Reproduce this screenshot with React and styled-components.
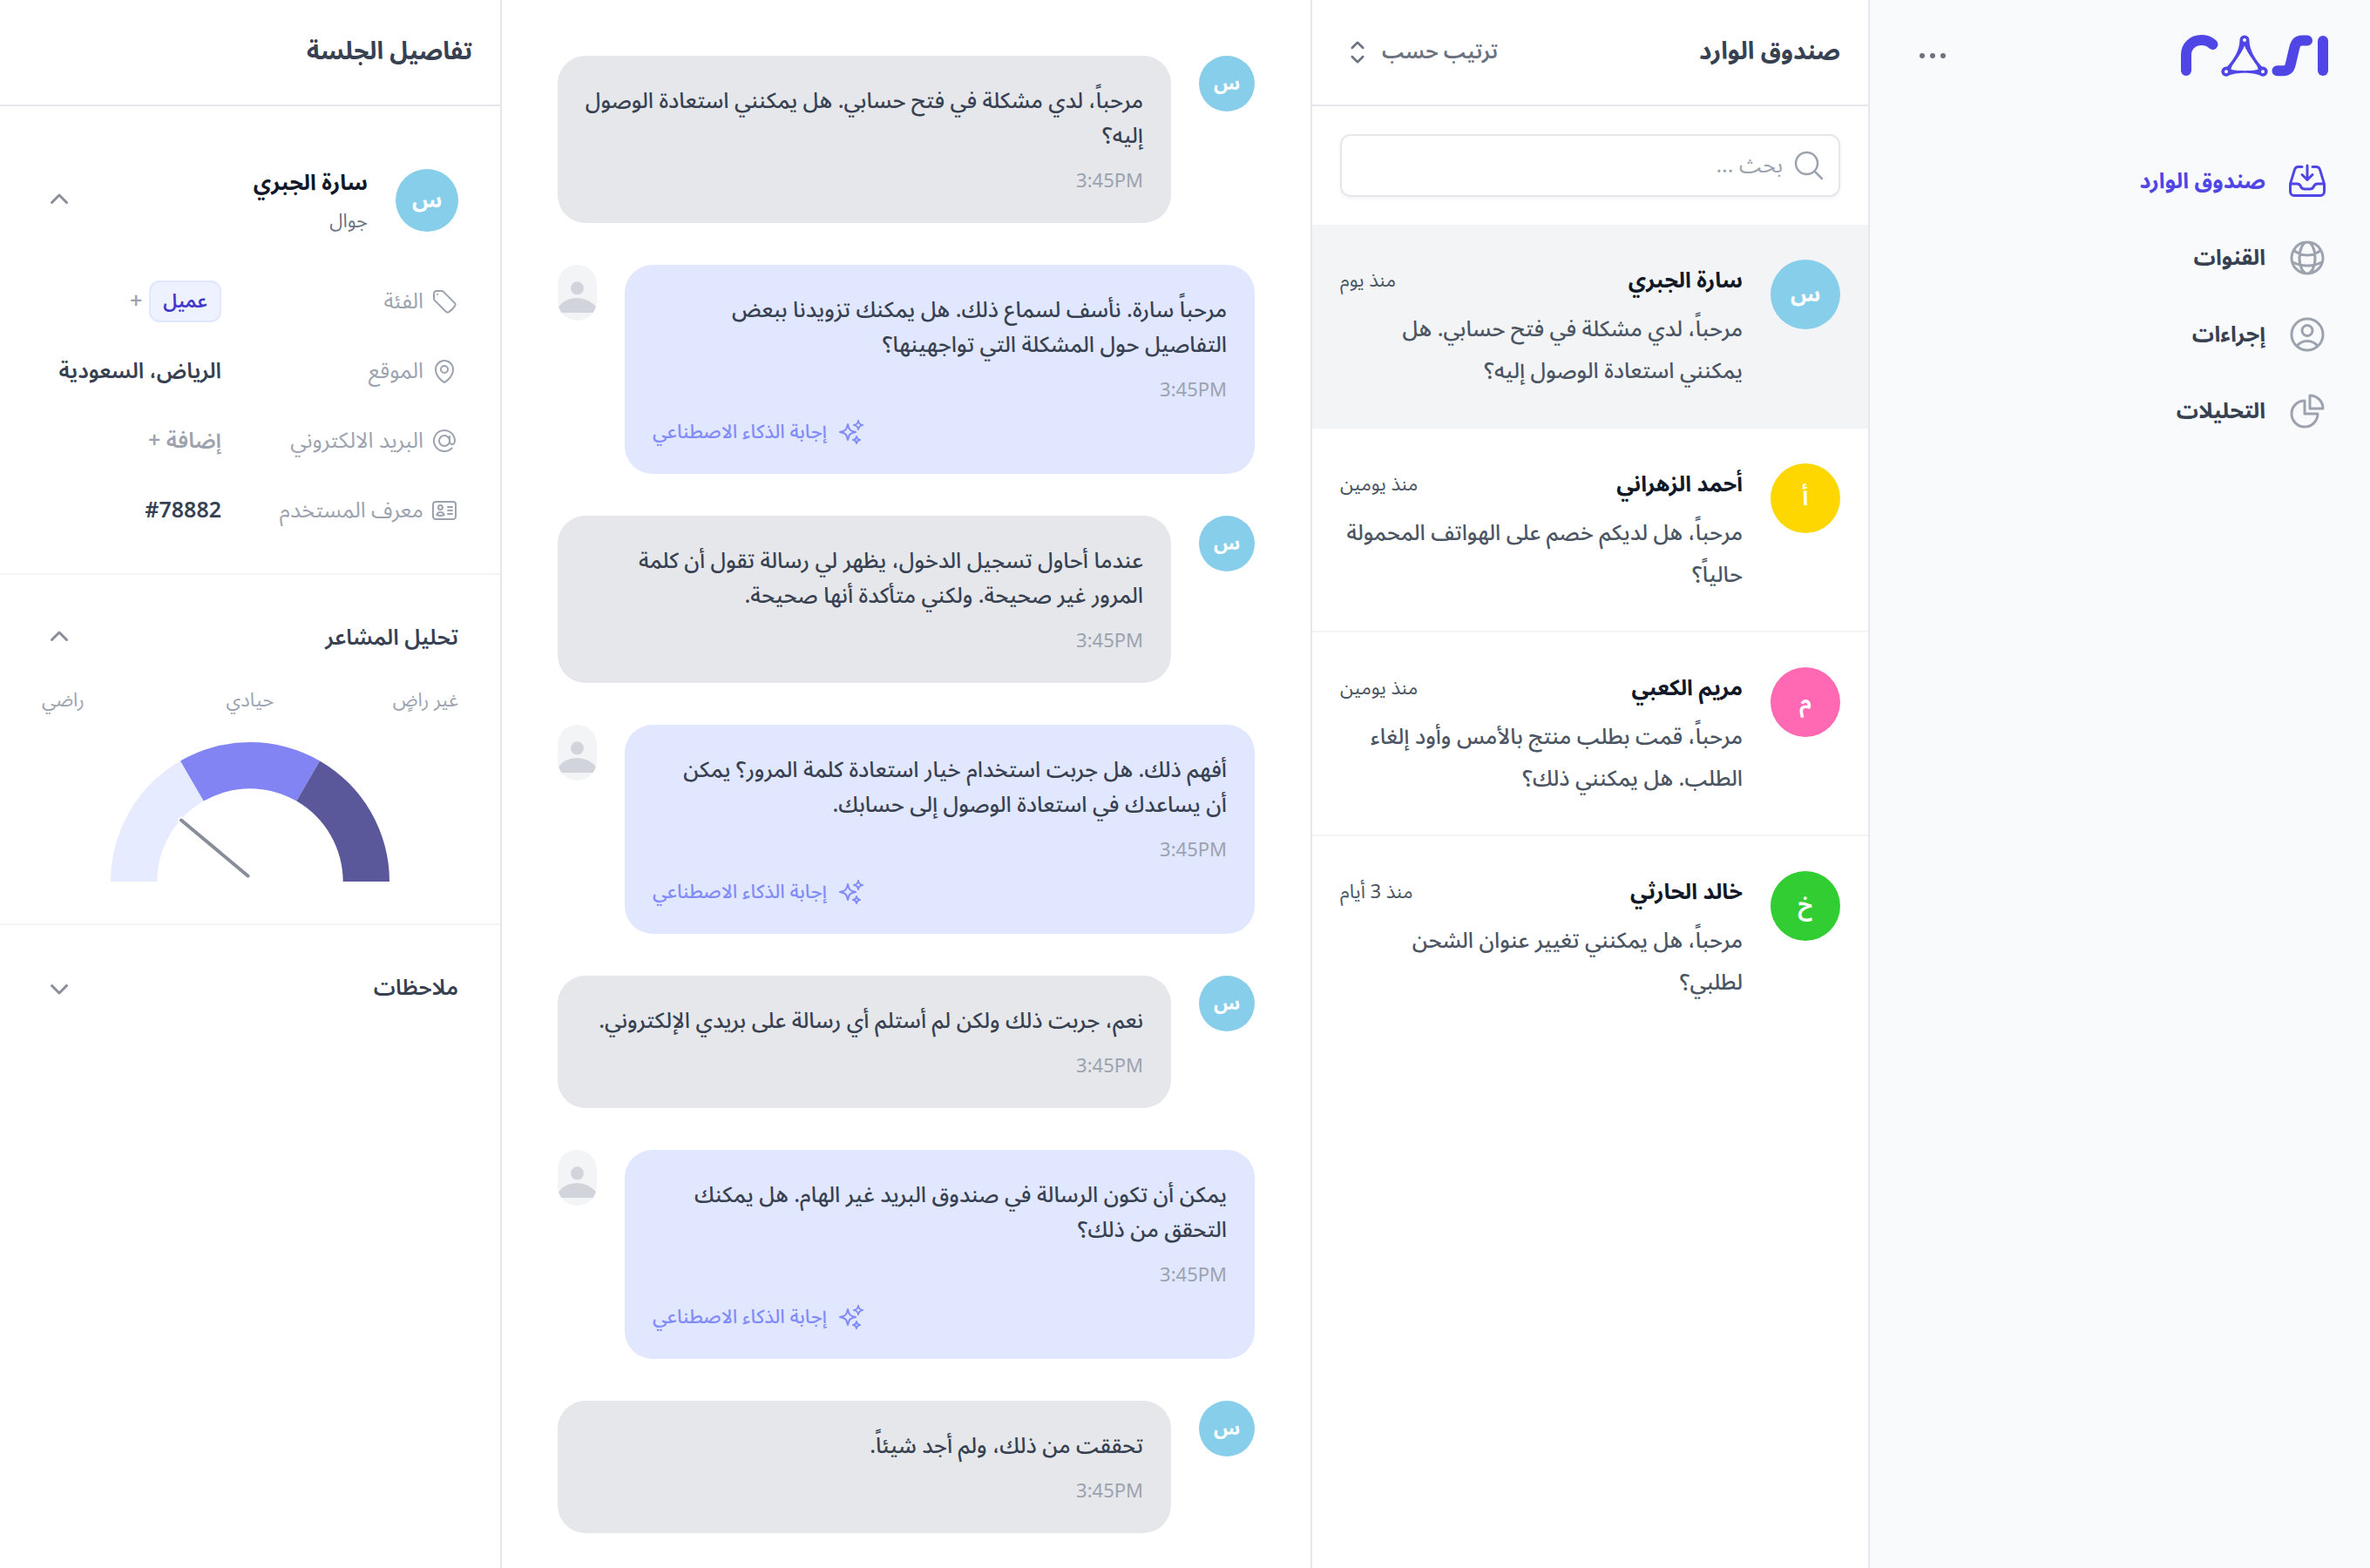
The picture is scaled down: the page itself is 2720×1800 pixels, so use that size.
import React from "react";
import styled, { createGlobalStyle } from "styled-components";
import {
  HiOutlineInboxArrowDown,
  HiOutlineGlobeAlt,
  HiOutlineUserCircle,
  HiOutlineChartPie,
  HiOutlineEllipsisHorizontal,
  HiOutlineMagnifyingGlass,
  HiOutlineChevronUpDown,
  HiMiniChevronUp,
  HiMiniChevronDown,
  HiOutlineSparkles,
  HiOutlineTag,
  HiOutlineMapPin,
  HiOutlineAtSymbol,
  HiOutlineIdentification,
} from "react-icons/hi2";

const GlobalStyle = createGlobalStyle`
  *, *::before, *::after { box-sizing: border-box; }
  body {
    margin: 0;
    background: #fff;
    color: #374151;
    font-family: "Noto Sans Arabic", "Noto Sans", "DejaVu Sans", sans-serif;
  }
  h1, h2, h3, p, ul, dl, dd, dt { margin: 0; padding: 0; font-size: inherit; font-weight: inherit; }
  ul { list-style: none; }
  button, input { font: inherit; color: inherit; }
  button { padding: 0; border: 0; background: none; cursor: pointer; }
  svg { display: block; flex: none; }
`;

const Layout = styled.div`
  display: grid;
  grid-template-columns: 576px 640px minmax(0, 1fr) 576px;
  height: 100vh;
  overflow: hidden;
`;

/* Sidebar */

const Sidebar = styled.aside`
  padding: 0 48px;
  background: #f9fafb;
  border-left: 2px solid #e5e7eb;
`;

const SidebarTop = styled.header`
  display: flex;
  align-items: center;
  justify-content: space-between;
  height: 128px;
`;

const IconButton = styled.button`
  display: flex;
  color: #6b7280;
`;

const NavList = styled.ul`
  display: grid;
  gap: 8px;
  padding-top: 40px;
`;

const NavLink = styled.a`
  display: flex;
  align-items: center;
  gap: 24px;
  height: 80px;
  font-size: 25px;
  font-weight: 700;
  line-height: 48px;
  text-decoration: none;
  color: ${(p) => (p.$active ? "#4f46e5" : "#374151")};
  svg { color: ${(p) => (p.$active ? "#4f46e5" : "#9ca3af")}; }
`;

/* Inbox */

const Inbox = styled.section`
  border-left: 2px solid #e5e7eb;
`;

const PanelHeader = styled.header`
  display: flex;
  align-items: center;
  justify-content: space-between;
  height: 122px;
  padding: 0 32px;
  border-bottom: 2px solid #e5e7eb;
`;

const PanelTitle = styled.h2`
  font-size: 28px;
  font-weight: 700;
  line-height: 48px;
`;

const SortButton = styled.button`
  display: flex;
  align-items: center;
  gap: 8px;
  font-size: 24px;
  font-weight: 600;
  line-height: 48px;
  color: #6b7280;
`;

const SearchArea = styled.div`
  padding: 32px;
`;

const SearchBox = styled.label`
  display: flex;
  align-items: center;
  gap: 10px;
  height: 72px;
  padding: 0 14px;
  border: 2px solid #e5e7eb;
  border-radius: 12px;
  box-shadow: 0 2px 4px rgba(0, 0, 0, 0.05);
  color: #9ca3af;
`;

const SearchInput = styled.input`
  flex: 1;
  min-width: 0;
  padding: 0;
  border: 0;
  outline: 0;
  background: none;
  font-size: 25px;
  line-height: 40px;
  &::placeholder { color: #9ca3af; opacity: 1; }
`;

const Conversation = styled.li`
  display: flex;
  gap: 32px;
  padding: 40px 32px;
  background: ${(p) => (p.$active ? "#f3f4f6" : "transparent")};
  border-bottom: ${(p) => (p.$last ? "0" : "2px solid #f3f4f6")};
`;

const ConversationBody = styled.div`
  flex: 1;
  min-width: 0;
  display: grid;
  gap: 8px;
`;

const ConversationTop = styled.div`
  display: flex;
  align-items: center;
  justify-content: space-between;
`;

const PersonName = styled.h3`
  font-size: 25px;
  font-weight: 700;
  line-height: 48px;
  color: #111827;
`;

const Ago = styled.time`
  font-size: 22px;
  line-height: 48px;
  color: #4b5563;
`;

const Preview = styled.p`
  font-size: 25px;
  font-weight: 500;
  line-height: 48px;
  white-space: pre-line;
  color: #4b5563;
`;

const Avatar = styled.span`
  flex: none;
  display: flex;
  align-items: center;
  justify-content: center;
  width: ${(p) => p.$size}px;
  height: ${(p) => p.$size}px;
  border-radius: 50%;
  background: ${(p) => p.$color};
  color: #fff;
  font-size: ${(p) => (p.$size > 64 ? 25 : 22)}px;
  font-weight: 700;
  line-height: 40px;
`;

/* Chat */

const Chat = styled.main`
  display: flex;
  flex-direction: column;
  gap: 48px;
  padding: 64px;
`;

const Message = styled.article`
  display: flex;
  align-items: flex-start;
  gap: 32px;
`;

const Bubble = styled.div`
  flex: 1;
  min-width: 0;
  display: grid;
  gap: 16px;
  padding: 32px;
  border-radius: 32px;
  background: ${(p) => (p.$agent ? "#e0e7ff" : "#e5e7eb")};
`;

const MessageText = styled.p`
  margin-inline-end: -8px;
  font-size: 25px;
  font-weight: 500;
  line-height: 40px;
  white-space: pre-line;
`;

const MessageTime = styled.time`
  font-size: 22px;
  line-height: 32px;
  color: #9ca3af;
`;

const AiNote = styled.p`
  display: flex;
  align-items: center;
  justify-content: flex-end;
  gap: 12px;
  font-size: 22px;
  font-weight: 500;
  line-height: 32px;
  color: #818cf8;
`;

const AgentAvatar = styled.span`
  flex: none;
  display: flex;
  align-items: center;
  width: 45px;
  height: 64px;
  overflow: hidden;
  border-radius: 24px;
  background: #f3f4f6;
  color: #d1d5db;
`;

/* Details */

const Details = styled.aside`
  border-right: 2px solid #e5e7eb;
`;

const Section = styled.section`
  display: grid;
  gap: 32px;
  padding: 48px;
  border-bottom: ${(p) => (p.$last ? "0" : "2px solid #f3f4f6")};
`;

const Profile = styled.div`
  display: flex;
  align-items: center;
  gap: 32px;
  height: 120px;
  color: #6b7280;
`;

const ProfileText = styled.div`
  flex: 1;
`;

const ProfileSub = styled.p`
  font-size: 22px;
  line-height: 40px;
`;

const SectionTop = styled.div`
  display: flex;
  align-items: center;
  justify-content: space-between;
`;

const SectionTitle = styled.h3`
  font-size: 25px;
  font-weight: 600;
  line-height: 48px;
`;

const Toggle = styled(IconButton)`
  color: #898e99;
`;

const Fields = styled.dl`
  display: grid;
  gap: 32px;
`;

const Field = styled.div`
  display: grid;
  grid-template-columns: 240px minmax(0, 1fr);
  gap: 32px;
  height: 48px;
  font-size: 25px;
  line-height: 48px;
`;

const FieldLabel = styled.dt`
  display: flex;
  align-items: center;
  gap: 8px;
  white-space: nowrap;
  color: #9ca3af;
`;

const FieldValue = styled.dd`
  display: flex;
  align-items: center;
  gap: 8px;
  font-weight: 600;
  white-space: nowrap;
`;

const Tag = styled.span`
  height: 48px;
  padding: 0 14px;
  border: 2px solid #e0e7ff;
  border-radius: 12px;
  background: #eef2ff;
  color: #4338ca;
  font-size: 22px;
  line-height: 44px;
`;

const AddButton = styled.button`
  color: #9ca3af;
  font-weight: 600;
`;

const GaugeLabels = styled.ul`
  display: grid;
  grid-template-columns: 1fr auto 1fr;
  font-size: 22px;
  line-height: 32px;
  color: #9ca3af;
  li:last-child { text-align: left; }
`;

const GaugeChart = styled.svg`
  width: 320px;
  height: 160px;
  justify-self: center;
  opacity: 0.8;
`;

function Logo() {
  return (
    <svg width="169" height="48" viewBox="0 0 169 48" fill="none" role="img" aria-label="RASI">
      <g stroke="#4f46e5" strokeWidth="12" strokeLinecap="round" strokeLinejoin="round">
        <path d="M6 41V23C6 12.500 14 6 23.500 6C29 6 33.500 8 36.500 11" />
        <path d="M110.500 41.300H117C123 41.300 124.500 39 126 33L130 16C131.500 9 133.500 6.500 139 6.500H145" />
        <path d="M163 7V41" />
      </g>
      <path
        fill="#4f46e5"
        fillRule="evenodd"
        d="M67.500 6A5.500 5.500 0 0 1 78.500 6C78.500 17 85 28 93 36.600A5.600 5.600 0 1 1 91 46.800C84 42.800 62 42.800 55 46.800A5.600 5.600 0 1 1 53 36.600C61 28 67.500 17 67.500 6ZM73 12.500C70.500 19 62 31 59 35C58 37 57.500 39 57.500 39.500C61 41.700 85 41.700 88.500 39.500C88.500 39 88 37 87 35C84 31 75.500 19 73 12.500ZM73 4A2 2 0 1 0 73 8A2 2 0 1 0 73 4ZM52 40.200A2 2 0 1 0 52 44.200A2 2 0 1 0 52 40.200ZM94 40.200A2 2 0 1 0 94 44.200A2 2 0 1 0 94 40.200Z"
      />
    </svg>
  );
}

function PersonSilhouette() {
  return (
    <svg width="45" height="45" viewBox="0 0 24 24" fill="currentColor" aria-hidden="true">
      <path d="M24 20.993V24H0v-2.996A14.977 14.977 0 0112.004 15c4.904 0 9.260 2.354 11.996 5.993zM16.002 8.999a4 4 0 11-8 0 4 4 0 018 0z" />
    </svg>
  );
}

function Gauge() {
  return (
    <GaugeChart viewBox="0 0 320 160" role="img" aria-label="تحليل المشاعر">
      <path fill="#e0e7ff" d="M0 160A160 160 0 0 1 80 21.436L106.667 67.624A106.667 106.667 0 0 0 53.333 160Z" />
      <path fill="#6366f1" d="M80 21.436A160 160 0 0 1 240 21.436L213.333 67.624A106.667 106.667 0 0 0 106.667 67.624Z" />
      <path fill="#312e81" d="M240 21.436A160 160 0 0 1 320 160H266.667A106.667 106.667 0 0 0 213.333 67.624Z" />
      <path d="M157.500 153.500L81 89.500" stroke="#fff" strokeWidth="8" strokeLinecap="round" />
      <path d="M157.500 153.500L81 89.500" stroke="#6b7280" strokeWidth="4" strokeLinecap="round" />
    </GaugeChart>
  );
}

const NAV = [
  { label: "صندوق الوارد", icon: HiOutlineInboxArrowDown, active: true },
  { label: "القنوات", icon: HiOutlineGlobeAlt },
  { label: "إجراءات", icon: HiOutlineUserCircle },
  { label: "التحليلات", icon: HiOutlineChartPie },
];

const CONVERSATIONS = [
  { name: "سارة الجبري", letter: "س", color: "#87ceeb", ago: "منذ يوم", text: "مرحباً، لدي مشكلة في فتح حسابي. هل\nيمكنني استعادة الوصول إليه؟", active: true },
  { name: "أحمد الزهراني", letter: "أ", color: "#ffd700", ago: "منذ يومين", text: "مرحباً، هل لديكم خصم على الهواتف المحمولة\nحالياً؟" },
  { name: "مريم الكعبي", letter: "م", color: "#ff69b4", ago: "منذ يومين", text: "مرحباً، قمت بطلب منتج بالأمس وأود إلغاء\nالطلب. هل يمكنني ذلك؟" },
  { name: "خالد الحارثي", letter: "خ", color: "#32cd32", ago: "منذ 3 أيام", text: "مرحباً، هل يمكنني تغيير عنوان الشحن\nلطلبي؟" },
];

const MESSAGES = [
  { text: "مرحباً، لدي مشكلة في فتح حسابي. هل يمكنني استعادة الوصول\nإليه؟" },
  { agent: true, text: "مرحباً سارة. نأسف لسماع ذلك. هل يمكنك تزويدنا ببعض\nالتفاصيل حول المشكلة التي تواجهينها؟" },
  { text: "عندما أحاول تسجيل الدخول، يظهر لي رسالة تقول أن كلمة\nالمرور غير صحيحة. ولكني متأكدة أنها صحيحة." },
  { agent: true, text: "أفهم ذلك. هل جربت استخدام خيار استعادة كلمة المرور؟ يمكن\nأن يساعدك في استعادة الوصول إلى حسابك." },
  { text: "نعم، جربت ذلك ولكن لم أستلم أي رسالة على بريدي الإلكتروني." },
  { agent: true, text: "يمكن أن تكون الرسالة في صندوق البريد غير الهام. هل يمكنك\nالتحقق من ذلك؟" },
  { text: "تحققت من ذلك، ولم أجد شيئاً." },
];

const FIELDS = [
  {
    label: "الفئة",
    icon: HiOutlineTag,
    value: (
      <>
        <Tag>عميل</Tag>
        <AddButton type="button" aria-label="إضافة فئة">+</AddButton>
      </>
    ),
  },
  { label: "الموقع", icon: HiOutlineMapPin, value: "الرياض، السعودية" },
  { label: "البريد الالكتروني", icon: HiOutlineAtSymbol, value: <AddButton type="button">إضافة +</AddButton> },
  { label: "معرف المستخدم", icon: HiOutlineIdentification, value: <bdi dir="ltr">#78882</bdi> },
];

export default function App() {
  return (
    <>
      <GlobalStyle />
      <Layout dir="rtl" lang="ar">
        <Sidebar>
          <SidebarTop>
            <Logo />
            <IconButton type="button" aria-label="المزيد">
              <HiOutlineEllipsisHorizontal size={48} />
            </IconButton>
          </SidebarTop>
          <nav>
            <NavList>
              {NAV.map(({ label, icon: Icon, active }) => (
                <li key={label}>
                  <NavLink href="#" $active={active} aria-current={active ? "page" : undefined}>
                    <Icon size={48} />
                    {label}
                  </NavLink>
                </li>
              ))}
            </NavList>
          </nav>
        </Sidebar>

        <Inbox>
          <PanelHeader>
            <PanelTitle>صندوق الوارد</PanelTitle>
            <SortButton type="button">
              ترتيب حسب
              <HiOutlineChevronUpDown size={40} />
            </SortButton>
          </PanelHeader>
          <SearchArea>
            <SearchBox>
              <HiOutlineMagnifyingGlass size={40} />
              <SearchInput type="text" placeholder="بحث ..." aria-label="بحث" />
            </SearchBox>
          </SearchArea>
          <ul>
            {CONVERSATIONS.map((c, i) => (
              <Conversation key={c.name} $active={c.active} $last={i === CONVERSATIONS.length - 1}>
                <Avatar $size={80} $color={c.color}>{c.letter}</Avatar>
                <ConversationBody>
                  <ConversationTop>
                    <PersonName>{c.name}</PersonName>
                    <Ago>{c.ago}</Ago>
                  </ConversationTop>
                  <Preview>{c.text}</Preview>
                </ConversationBody>
              </Conversation>
            ))}
          </ul>
        </Inbox>

        <Chat>
          {MESSAGES.map((m) => (
            <Message key={m.text}>
              {!m.agent && <Avatar $size={64} $color="#87ceeb">س</Avatar>}
              <Bubble $agent={m.agent}>
                <MessageText>{m.text}</MessageText>
                <MessageTime>3:45PM</MessageTime>
                {m.agent && (
                  <AiNote>
                    <HiOutlineSparkles size={32} />
                    إجابة الذكاء الاصطناعي
                  </AiNote>
                )}
              </Bubble>
              {m.agent && (
                <AgentAvatar>
                  <PersonSilhouette />
                </AgentAvatar>
              )}
            </Message>
          ))}
        </Chat>

        <Details>
          <PanelHeader>
            <PanelTitle>تفاصيل الجلسة</PanelTitle>
          </PanelHeader>
          <Section>
            <Profile>
              <Avatar $size={72} $color="#87ceeb">س</Avatar>
              <ProfileText>
                <PersonName>سارة الجبري</PersonName>
                <ProfileSub>جوال</ProfileSub>
              </ProfileText>
              <Toggle type="button" aria-label="طي البيانات">
                <HiMiniChevronUp size={40} />
              </Toggle>
            </Profile>
            <Fields>
              {FIELDS.map(({ label, icon: Icon, value }) => (
                <Field key={label}>
                  <FieldLabel>
                    <Icon size={32} />
                    {label}
                  </FieldLabel>
                  <FieldValue>{value}</FieldValue>
                </Field>
              ))}
            </Fields>
          </Section>
          <Section>
            <SectionTop>
              <SectionTitle>تحليل المشاعر</SectionTitle>
              <Toggle type="button" aria-label="طي تحليل المشاعر">
                <HiMiniChevronUp size={40} />
              </Toggle>
            </SectionTop>
            <GaugeLabels>
              <li>غير راضٍ</li>
              <li>حيادي</li>
              <li>راضي</li>
            </GaugeLabels>
            <Gauge />
          </Section>
          <Section $last>
            <SectionTop>
              <SectionTitle>ملاحظات</SectionTitle>
              <Toggle type="button" aria-label="عرض الملاحظات">
                <HiMiniChevronDown size={40} />
              </Toggle>
            </SectionTop>
          </Section>
        </Details>
      </Layout>
    </>
  );
}
